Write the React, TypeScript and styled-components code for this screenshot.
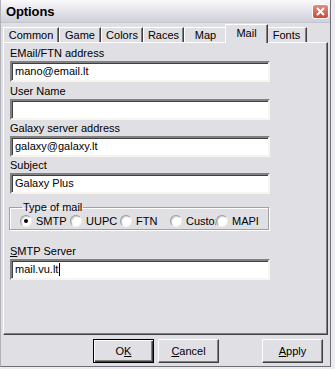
import styled, { createGlobalStyle, css } from "styled-components";

const GlobalStyle = createGlobalStyle`
  html, body {
    margin: 0;
    padding: 0;
    background: #ececf0;
  }
  body {
    font-family: "Liberation Sans", Arial, sans-serif;
    font-size: 11px;
    color: #000;
  }
`;

const Window = styled.div`
  width: 331px;
  height: 367px;
  box-sizing: border-box;
  background: #e0dfe3;
  border-left: 1px solid #b0b0b8;
  border-right: 1px solid #707078;
  border-bottom: 1px solid #707078;
  display: flex;
  flex-direction: column;
`;

const TitleBar = styled.div`
  height: 22px;
  flex: none;
  display: flex;
  align-items: center;
  justify-content: space-between;
  padding: 0 1px 0 5px;
  background: linear-gradient(#fafafc 0%, #e6e6ec 45%, #cfcfd9 100%);
  border-bottom: 1px solid #c4c4cc;
`;

const Title = styled.span`
  font-size: 13px;
  font-weight: bold;
  color: #000;
  letter-spacing: -0.1px;
`;

const CloseButton = styled.div`
  width: 17px;
  height: 15px;
  box-sizing: border-box;
  border: 1px solid #fff;
  border-radius: 3px;
  background: linear-gradient(#e88a7c, #c94a3a);
  display: flex;
  align-items: center;
  justify-content: center;
`;

const Body = styled.div`
  flex: 1;
  display: flex;
  flex-direction: column;
  padding: 0 2px 0 2px;
`;

const TabStrip = styled.div`
  display: flex;
  align-items: flex-end;
  height: 19px;
  position: relative;
  z-index: 1;
`;

const Tab = styled.div<{ $width: number; $active?: boolean }>`
  width: ${(p) => p.$width}px;
  height: 15px;
  box-sizing: border-box;
  display: flex;
  justify-content: center;
  align-items: center;
  background: #e0dfe3;
  border-top: 1px solid #fff;
  border-left: 1px solid #fff;
  border-right: 1px solid #404040;
  box-shadow: inset -1px 0 #808080;
  ${(p) =>
    p.$active &&
    css`
      height: 19px;
      margin: 0 -2px -1px;
      align-items: flex-start;
      padding-top: 2px;
      position: relative;
      z-index: 2;
    `}
`;

const Panel = styled.div`
  height: 293px;
  box-sizing: border-box;
  border-top: 1px solid #fff;
  border-left: 1px solid #fff;
  border-right: 1px solid #404040;
  border-bottom: 1px solid #404040;
  box-shadow: inset -1px -1px #808080;
  padding: 2px 6px 0 6px;
  display: flex;
  flex-direction: column;
`;

const Label = styled.div<{ $gap?: number }>`
  line-height: 16px;
  height: 16px;
  margin-top: ${(p) => p.$gap ?? 0}px;
`;

const Field = styled.div`
  width: 260px;
  height: 21px;
  box-sizing: border-box;
  background: #fff;
  border: 2px solid;
  border-color: #808080 #f6f6ee #f6f6ee #808080;
  box-shadow: inset 1px 1px #404040;
  padding: 0 0 0 3px;
  line-height: 17px;
  white-space: nowrap;
  display: flex;
  align-items: center;
`;

const Caret = styled.span`
  display: inline-block;
  width: 1px;
  height: 13px;
  background: #000;
  margin-left: 1px;
`;

const Group = styled.fieldset`
  width: 260px;
  box-sizing: border-box;
  margin: 7px 0 0 -1px;
  padding: 0 0 1px 10px;
  border: 1px solid #a0a0a0;
  box-shadow: 1px 1px #fff, inset 1px 1px #fff;
`;

const Legend = styled.legend`
  padding: 0 1px;
  margin-left: 2px;
  line-height: 12px;
  font-size: 11px;
`;

const RadioRow = styled.div`
  display: flex;
  height: 15px;
  align-items: center;
`;

/* labels run on under the next button's circle, as in the original dialog */
const RadioItem = styled.div<{ $width: number }>`
  width: ${(p) => p.$width}px;
  display: flex;
  align-items: center;
  gap: 4px;
  white-space: nowrap;
  flex: none;
`;

const RadioCircle = styled.span<{ $checked?: boolean }>`
  width: 12px;
  height: 12px;
  box-sizing: border-box;
  flex: none;
  border-radius: 50%;
  background: #fff;
  border: 1px solid;
  border-color: #9a9a9a #f2f2ea #f2f2ea #9a9a9a;
  box-shadow: inset 1px 1px #cfcfcf, 0 0 0 1px #e0dfe3;
  display: flex;
  align-items: center;
  justify-content: center;
  &::after {
    content: "";
    width: 4px;
    height: 4px;
    border-radius: 50%;
    background: ${(p) => (p.$checked ? "#000" : "transparent")};
  }
`;

const ButtonRow = styled.div`
  display: flex;
  justify-content: flex-end;
  padding: 4px 5px 0 0;
`;

const Button = styled.button<{ $default?: boolean; $gap?: number }>`
  width: 61px;
  height: 24px;
  margin-left: ${(p) => p.$gap ?? 0}px;
  box-sizing: border-box;
  font-family: "Liberation Sans", Arial, sans-serif;
  font-size: 11px;
  color: #000;
  background: #e0dfe3;
  padding: 0;
  border: 1px solid;
  border-color: #fff #404040 #404040 #fff;
  box-shadow: inset -1px -1px #808080;
  ${(p) =>
    p.$default &&
    css`
      border: 1px solid #000;
      box-shadow: inset 1px 1px #fff, inset -1px -1px #404040, inset -2px -2px #808080;
    `}
`;

const tabs = [
  { name: "Common", width: 56 },
  { name: "Game", width: 42 },
  { name: "Colors", width: 42 },
  { name: "Races", width: 41 },
  { name: "Map", width: 43 },
  { name: "Mail", width: 43, active: true },
  { name: "Fonts", width: 41 },
];

const radios = [
  { name: "SMTP", width: 50, checked: true },
  { name: "UUPC", width: 50 },
  { name: "FTN", width: 50 },
  { name: "Custom", width: 46 },
  { name: "MAPI", width: 50 },
];

export default function App() {
  return (
    <>
      <GlobalStyle />
      <Window>
        <TitleBar>
          <Title>Options</Title>
          <CloseButton>
            <svg width="9" height="9" viewBox="0 0 9 9">
              <path d="M1 1 L8 8 M8 1 L1 8" stroke="#fff" strokeWidth="2" />
            </svg>
          </CloseButton>
        </TitleBar>
        <Body>
          <TabStrip>
            {tabs.map((t) => (
              <Tab key={t.name} $width={t.width} $active={t.active}>
                {t.name}
              </Tab>
            ))}
          </TabStrip>
          <Panel>
            <Label>EMail/FTN address</Label>
            <Field>mano@email.lt</Field>
            <Label $gap={1}>User Name</Label>
            <Field />
            <Label>Galaxy server address</Label>
            <Field>galaxy@galaxy.lt</Field>
            <Label>Subject</Label>
            <Field>Galaxy Plus</Field>
            <Group>
              <Legend>Type of mail</Legend>
              <RadioRow>
                {radios.map((r) => (
                  <RadioItem key={r.name} $width={r.width}>
                    <RadioCircle $checked={r.checked} />
                    {r.name}
                  </RadioItem>
                ))}
              </RadioRow>
            </Group>
            <Label $gap={13}>
              <u>S</u>MTP Server
            </Label>
            <Field>
              mail.vu.lt
              <Caret />
            </Field>
          </Panel>
          <ButtonRow>
            <Button $default>
              O<u>K</u>
            </Button>
            <Button $gap={4}>
              <u>C</u>ancel
            </Button>
            <Button $gap={43}>
              <u>A</u>pply
            </Button>
          </ButtonRow>
        </Body>
      </Window>
    </>
  );
}
